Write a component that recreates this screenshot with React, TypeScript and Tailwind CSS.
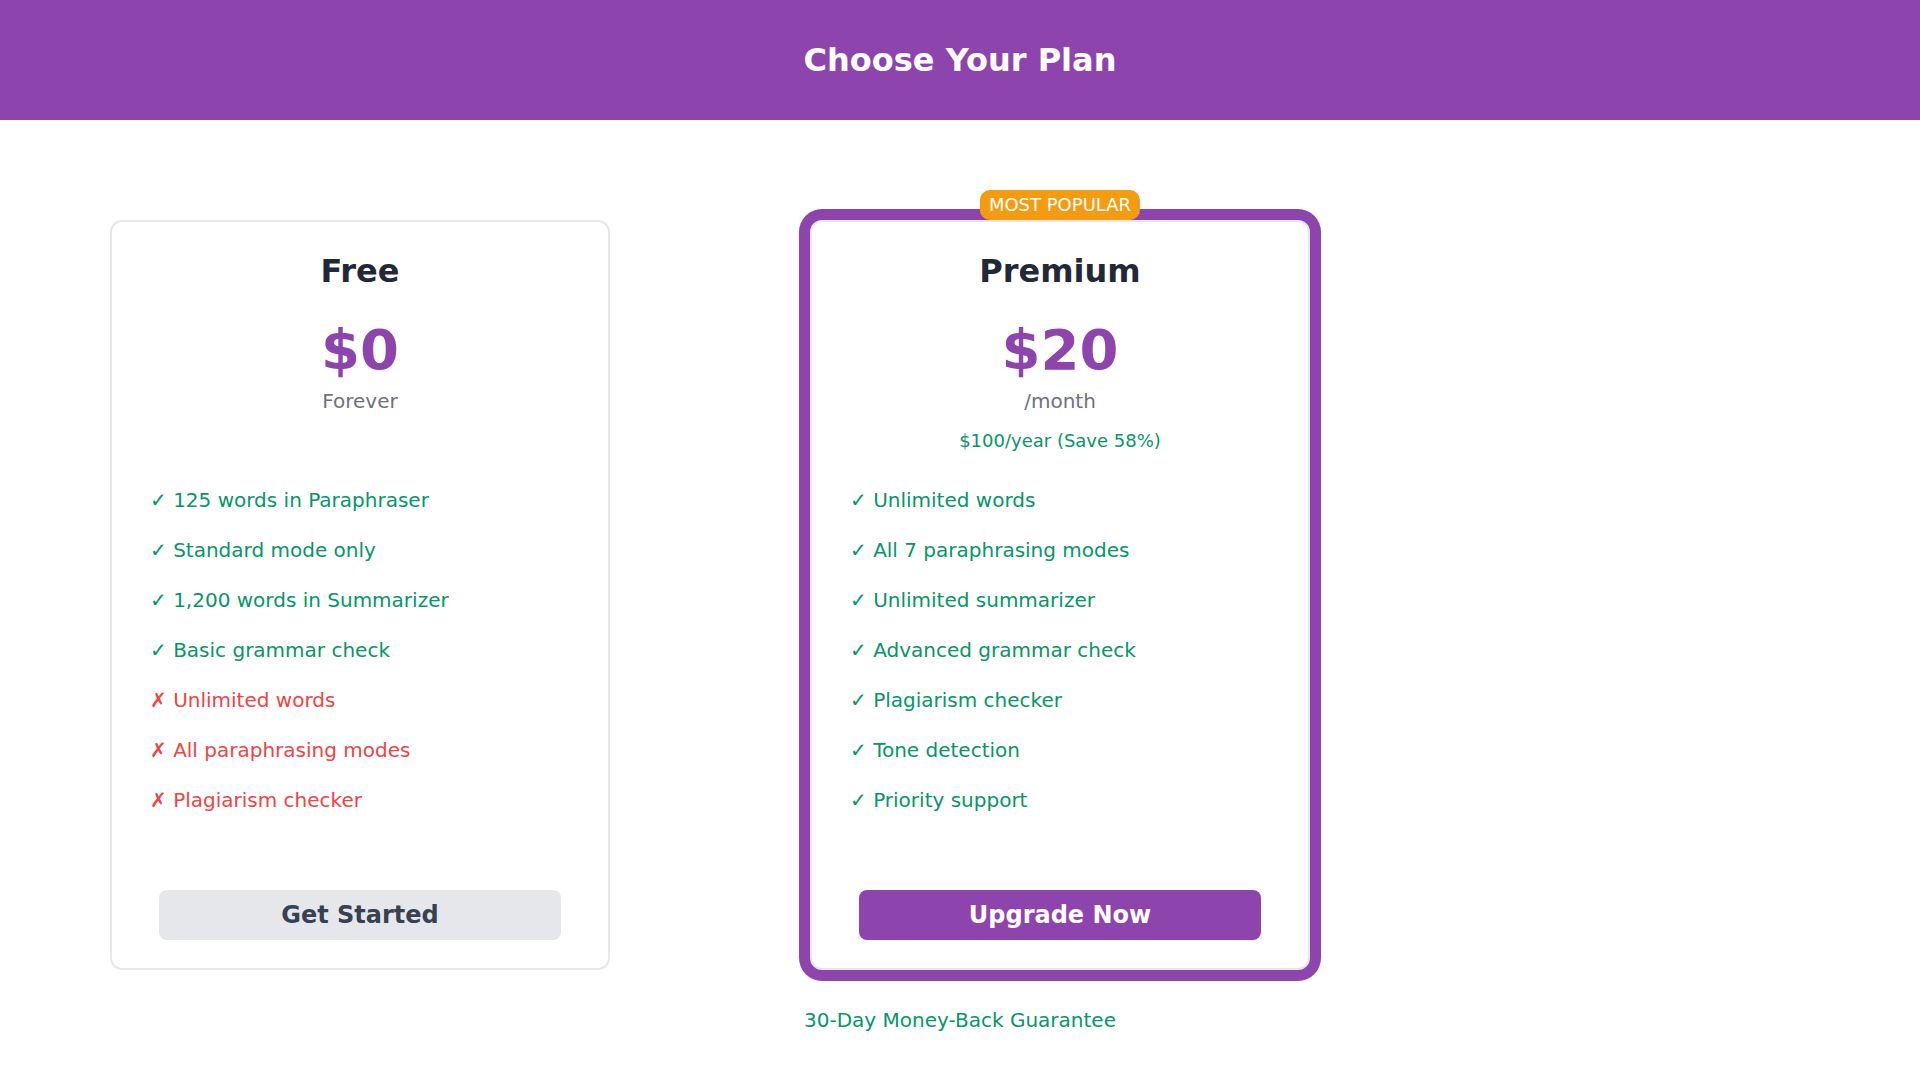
import React from 'react';

type Feature = { text: string; included: boolean };

type Plan = {
  name: string;
  price: string;
  period: string;
  yearly?: string;
  features: Feature[];
  cta: string;
  popular?: boolean;
};

const plans: Plan[] = [
  {
    name: 'Free',
    price: '$0',
    period: 'Forever',
    features: [
      { text: '125 words in Paraphraser', included: true },
      { text: 'Standard mode only', included: true },
      { text: '1,200 words in Summarizer', included: true },
      { text: 'Basic grammar check', included: true },
      { text: 'Unlimited words', included: false },
      { text: 'All paraphrasing modes', included: false },
      { text: 'Plagiarism checker', included: false },
    ],
    cta: 'Get Started',
  },
  {
    name: 'Premium',
    price: '$20',
    period: '/month',
    yearly: '$100/year (Save 58%)',
    features: [
      { text: 'Unlimited words', included: true },
      { text: 'All 7 paraphrasing modes', included: true },
      { text: 'Unlimited summarizer', included: true },
      { text: 'Advanced grammar check', included: true },
      { text: 'Plagiarism checker', included: true },
      { text: 'Tone detection', included: true },
      { text: 'Priority support', included: true },
    ],
    cta: 'Upgrade Now',
    popular: true,
  },
];

function PlanCard({ plan }: { plan: Plan }) {
  return (
    <div
      className={
        plan.popular
          ? 'relative flex h-[750px] w-[500px] flex-col rounded-[12px] border-2 border-[#e5e7eb] bg-white px-[30px] pt-[30px] pb-[28px] ring-[11px] ring-[#8e44ad]'
          : 'relative flex h-[750px] w-[500px] flex-col rounded-[12px] border-2 border-[#e5e7eb] bg-white px-[30px] pt-[30px] pb-[28px]'
      }
    >
      {plan.popular && (
        <div className="absolute top-[-32px] left-1/2 -translate-x-1/2 rounded-[10px] bg-[#f39c12] px-[9px] text-[18px] leading-[30px] whitespace-nowrap text-white">
          MOST POPULAR
        </div>
      )}

      {/* header + price block, same height on both cards so the lists line up */}
      <div className="h-[233px] text-center">
        <h2 className="text-[32px] leading-[38px] font-bold text-[#1f2937]">{plan.name}</h2>
        <div className="mt-[31px] text-[56px] leading-[58px] font-bold text-[#8e44ad]">{plan.price}</div>
        <div className="mt-[7px] text-[20px] leading-[30px] text-[#6b7280]">{plan.period}</div>
        {plan.yearly && (
          <div className="mt-[11px] text-[18px] leading-[27px] text-[#059669]">{plan.yearly}</div>
        )}
      </div>

      <ul className="flex flex-col gap-[20px] pl-[8px]">
        {plan.features.map((f) => (
          <li
            key={f.text}
            className={f.included ? 'text-[20px] leading-[30px] text-[#059669]' : 'text-[20px] leading-[30px] text-[#ef4444]'}
          >
            {f.included ? '✓' : '✗'} {f.text}
          </li>
        ))}
      </ul>

      <button
        className={
          plan.popular
            ? 'mx-auto mt-auto flex h-[50px] w-[402px] shrink-0 items-center justify-center rounded-[8px] bg-[#8e44ad] text-[24px] font-bold text-white'
            : 'mx-auto mt-auto flex h-[50px] w-[402px] shrink-0 items-center justify-center rounded-[8px] bg-[#e5e7eb] text-[24px] font-bold text-[#374151]'
        }
      >
        {plan.cta}
      </button>
    </div>
  );
}

export default function App() {
  return (
    <div className="min-h-screen bg-white font-['DejaVu_Sans',sans-serif]">
      <header className="flex h-[120px] items-center justify-center bg-[#8e44ad]">
        <h1 className="text-[32px] font-bold text-white">Choose Your Plan</h1>
      </header>

      <main className="flex gap-[200px] px-[110px] pt-[100px]">
        {plans.map((p) => (
          <PlanCard key={p.name} plan={p} />
        ))}
      </main>

      <p className="mt-[35px] text-center text-[20px] leading-[30px] text-[#059669]">30-Day Money-Back Guarantee</p>
    </div>
  );
}
